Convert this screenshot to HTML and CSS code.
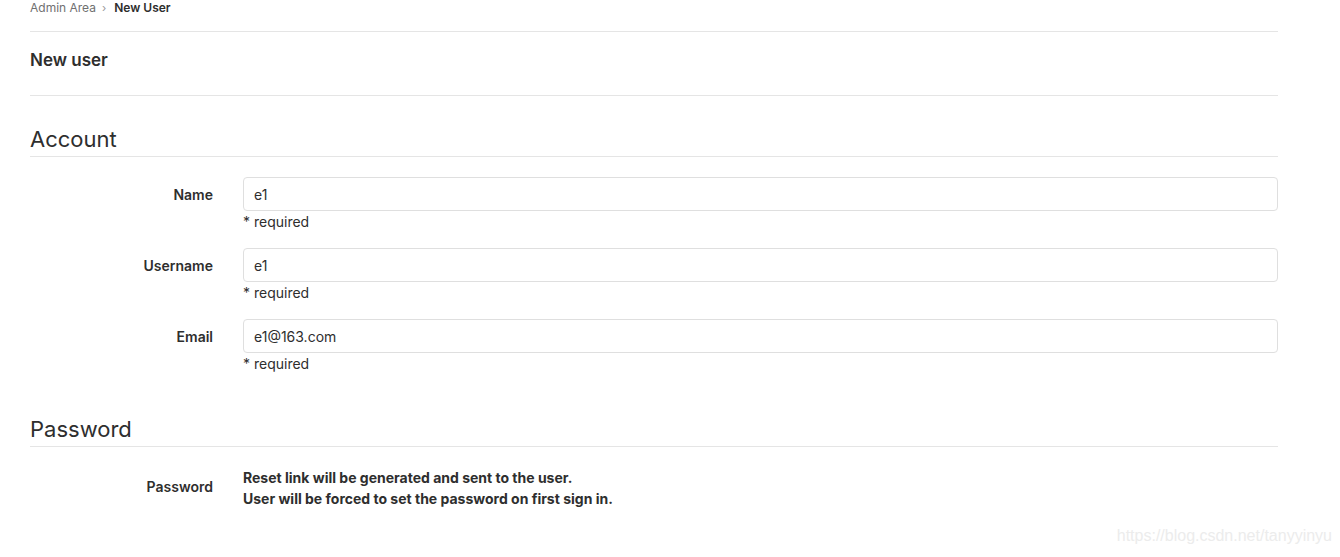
FILE: index.html
```html
<!DOCTYPE html>
<html>
<head>
<meta charset="utf-8">
<link rel="stylesheet" href="styles.css">
</head>
<body>
<div class="page">
  <nav class="breadcrumb">
    <span class="crumb">Admin Area</span>
    <span class="sep">›</span>
    <span class="crumb current">New User</span>
  </nav>
  <div class="page-title">New user</div>

  <h2 class="section">Account</h2>
  <div class="form-row">
    <label class="label">Name</label>
    <div class="field">
      <div class="input">e1</div>
      <div class="hint">* required</div>
    </div>
  </div>
  <div class="form-row">
    <label class="label">Username</label>
    <div class="field">
      <div class="input">e1</div>
      <div class="hint">* required</div>
    </div>
  </div>
  <div class="form-row">
    <label class="label">Email</label>
    <div class="field">
      <div class="input">e1@163.com</div>
      <div class="hint">* required</div>
    </div>
  </div>

  <h2 class="section pw-section">Password</h2>
  <div class="form-row pw-row">
    <label class="label">Password</label>
    <div class="field">
      <div class="pw-text">Reset link will be generated and sent to the user.<br>User will be forced to set the password on first sign in.</div>
    </div>
  </div>

  <h2 class="section access">Access</h2>
</div>
<div class="watermark">https://blog.csdn.net/tanyyinyu</div>
</body>
</html>
```
FILE: styles.css
```css
html, body {
  margin: 0;
  padding: 0;
  background: #fff;
  overflow: hidden;
}
body {
  font-family: Inter, "Liberation Sans", Arial, sans-serif;
  color: #2e2e2e;
  width: 1340px;
  height: 557px;
  position: relative;
}
.page {
  margin-left: 30px;
  width: 1248px;
}
.breadcrumb {
  height: 31px;
  border-bottom: 1px solid #e5e5e5;
  font-size: 12px;
  line-height: 16px;
  display: flex;
  align-items: flex-start;
  gap: 6px;
}
.crumb { color: #707070; }
.crumb.current { color: #2e2e2e; font-weight: 600; margin-left: 2px; }
.sep { color: #999; font-size: 11px; }
.page-title {
  font-size: 17px;
  font-weight: 600;
  height: 63px;
  line-height: 57px;
  border-bottom: 1px solid #e5e5e5;
}
.section {
  margin: 0;
  font-weight: normal;
  font-size: 22px;
  line-height: 28px;
  padding-top: 29px;
  padding-bottom: 3px;
  border-bottom: 1px solid #e5e5e5;
  margin-bottom: 20px;
}
.form-row {
  display: flex;
  gap: 30px;
  margin-bottom: 15px;
}
.label {
  width: 183px;
  text-align: right;
  font-size: 14px;
  font-weight: 600;
  line-height: 35px;
  flex: none;
}
.field { flex: 1; }
.input {
  height: 32px;
  border: 1px solid #dfdfdf;
  border-radius: 4px;
  padding: 0 10px;
  font-size: 14px;
  line-height: 34px;
}
.hint {
  font-size: 14px;
  line-height: 22px;
}
.pw-section { padding-top: 25px; }
.pw-row .label { line-height: 20px; padding-top: 10px; }
.pw-text {
  font-size: 14px;
  font-weight: 700;
  line-height: 21px;
  padding-top: 0;
}
.access {
  border-bottom: none;
  padding-top: 27px;
}
.watermark {
  position: absolute;
  right: 8px;
  bottom: 12px;
  color: #ececec;
  font-size: 16px;
  font-family: "Liberation Sans", Arial, sans-serif;
}
```
